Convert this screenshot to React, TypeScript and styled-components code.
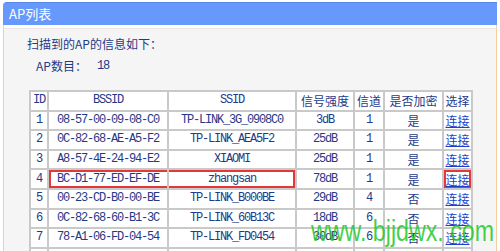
import React from 'react';
import styled, { createGlobalStyle, css } from 'styled-components';

const GlobalStyle = createGlobalStyle`
  html, body {
    margin: 0;
    padding: 0;
    background: #ffffff;
  }
  body {
    width: 500px;
    height: 251px;
    overflow: hidden;
    font-family: "Noto Sans CJK SC", "DejaVu Sans", sans-serif;
  }
`;

const Page = styled.div`
  position: relative;
  width: 500px;
  height: 251px;
  overflow: hidden;
  padding: 2px 3px 0 3px;
  box-sizing: border-box;
`;

const Header = styled.div`
  height: 23px;
  background: #6699fb;
  border-top: 1px solid #5a88ea;
  border-radius: 4px 0 0 0;
  box-sizing: border-box;
  padding-left: 6px;
  color: #ffffff;
  font-size: 13px;
  line-height: 21px;
  font-family: "Noto Sans CJK SC", sans-serif;
`;

const Gap = styled.div`
  height: 3px;
  background: #ffffff;
  border-left: 1px solid #f3cf9f;
  border-right: 1px solid #f3cf9f;
  border-bottom: 1px solid #ebe3e3;
`;

const Panel = styled.div`
  background: #f5f5f5;
  border-left: 1px solid #f3cf9f;
  border-right: 1px solid #f3cf9f;
  height: 240px;
  padding: 6px 0 0 23px;
  box-sizing: border-box;
  color: #1f3a88;
`;

const Title = styled.div`
  font-size: 12px;
  line-height: 18px;
`;

const Count = styled.div`
  font-size: 12px;
  line-height: 18px;
  margin-top: 4px;
  padding-left: 9px;
  display: flex;
`;

const CountValue = styled.span`
  font-family: "Liberation Mono", monospace;
  letter-spacing: -1px;
  margin-left: 10px;
`;

const Table = styled.table`
  margin-top: 15px;
  margin-left: 2px;
  width: 442px;
  table-layout: fixed;
  border-collapse: collapse;
  background: #ffffff;
`;

const Row = styled.tr`
  height: 19.6px;
`;

const Cell = styled.td<{ $mono?: boolean; $box?: 'left' | 'right' | 'all' }>`
  border: 2px solid #c9c9c9;
  padding: 0;
  text-align: center;
  font-size: 12px;
  line-height: 15px;
  color: #1f3a88;
  white-space: nowrap;
  overflow: hidden;
  ${(p) =>
    p.$mono &&
    css`
      font-family: "Liberation Mono", monospace;
      letter-spacing: -1.2px;
    `}
  ${(p) =>
    p.$box === 'left' &&
    css`
      box-shadow: inset 2px 0 0 #e2383a, inset 0 2px 0 #e2383a, inset 0 -2px 0 #e2383a;
    `}
  ${(p) =>
    p.$box === 'right' &&
    css`
      box-shadow: inset -2px 0 0 #e2383a, inset 0 2px 0 #e2383a, inset 0 -2px 0 #e2383a;
    `}
  ${(p) =>
    p.$box === 'all' &&
    css`
      box-shadow: inset 0 0 0 2px #e2383a;
    `}
`;

const HeadCell = styled(Cell).attrs({ as: 'th' })`
  font-weight: normal;
`;

const Link = styled.a`
  color: #1c3fd2;
  text-decoration: underline;
  cursor: pointer;
`;

const Watermark = styled.div`
  position: absolute;
  left: 311px;
  top: 215px;
  font-family: "Liberation Sans", Arial, sans-serif;
  font-size: 29px;
  line-height: 32px;
  color: rgba(34, 200, 40, 0.85);
  white-space: pre;
  transform: scaleX(0.8);
  transform-origin: left center;
`;

type Ap = {
  id: number;
  bssid: string;
  ssid: string;
  signal: string;
  channel: string;
  secure: string;
  marked?: boolean;
};

const aps: Ap[] = [
  { id: 1, bssid: '08-57-00-09-08-C0', ssid: 'TP-LINK_3G_0908C0', signal: '3dB', channel: '1', secure: '是' },
  { id: 2, bssid: '0C-82-68-AE-A5-F2', ssid: 'TP-LINK_AEA5F2', signal: '25dB', channel: '1', secure: '是' },
  { id: 3, bssid: 'A8-57-4E-24-94-E2', ssid: 'XIAOMI', signal: '25dB', channel: '1', secure: '是' },
  { id: 4, bssid: 'BC-D1-77-ED-EF-DE', ssid: 'zhangsan', signal: '78dB', channel: '1', secure: '是', marked: true },
  { id: 5, bssid: '00-23-CD-B0-00-BE', ssid: 'TP-LINK_B000BE', signal: '29dB', channel: '4', secure: '否' },
  { id: 6, bssid: '0C-82-68-60-B1-3C', ssid: 'TP-LINK_60B13C', signal: '18dB', channel: '6', secure: '否' },
  { id: 7, bssid: '78-A1-06-FD-04-54', ssid: 'TP-LINK_FD0454', signal: '30dB', channel: '6', secure: '否' },
];

const App: React.FunctionComponent = (): JSX.Element => {
  return (
    <Page>
      <GlobalStyle />
      <Header>AP列表</Header>
      <Gap />
      <Panel>
        <Title>扫描到的AP的信息如下：</Title>
        <Count>
          AP数目：<CountValue>18</CountValue>
        </Count>
        <Table>
          <colgroup>
            <col style={{ width: 18 }} />
            <col style={{ width: 120 }} />
            <col style={{ width: 128 }} />
            <col style={{ width: 58 }} />
            <col style={{ width: 30 }} />
            <col style={{ width: 59 }} />
            <col style={{ width: 29 }} />
          </colgroup>
          <thead>
            <Row>
              <HeadCell $mono>ID</HeadCell>
              <HeadCell $mono>BSSID</HeadCell>
              <HeadCell $mono>SSID</HeadCell>
              <HeadCell>信号强度</HeadCell>
              <HeadCell>信道</HeadCell>
              <HeadCell>是否加密</HeadCell>
              <HeadCell>选择</HeadCell>
            </Row>
          </thead>
          <tbody>
            {aps.map((ap) => (
              <Row key={ap.id}>
                <Cell $mono>{ap.id}</Cell>
                <Cell $mono $box={ap.marked ? 'left' : undefined}>{ap.bssid}</Cell>
                <Cell $mono $box={ap.marked ? 'right' : undefined}>{ap.ssid}</Cell>
                <Cell $mono>{ap.signal}</Cell>
                <Cell $mono>{ap.channel}</Cell>
                <Cell>{ap.secure}</Cell>
                <Cell $box={ap.marked ? 'all' : undefined}>
                  <Link>连接</Link>
                </Cell>
              </Row>
            ))}
            <Row>
              <Cell $mono>&nbsp;</Cell>
              <Cell $mono>&nbsp;</Cell>
              <Cell $mono>&nbsp;</Cell>
              <Cell $mono>&nbsp;</Cell>
              <Cell $mono>&nbsp;</Cell>
              <Cell>&nbsp;</Cell>
              <Cell>&nbsp;</Cell>
            </Row>
          </tbody>
        </Table>
      </Panel>
      <Watermark>www. bjjdwx. com</Watermark>
    </Page>
  );
};

export default App;
